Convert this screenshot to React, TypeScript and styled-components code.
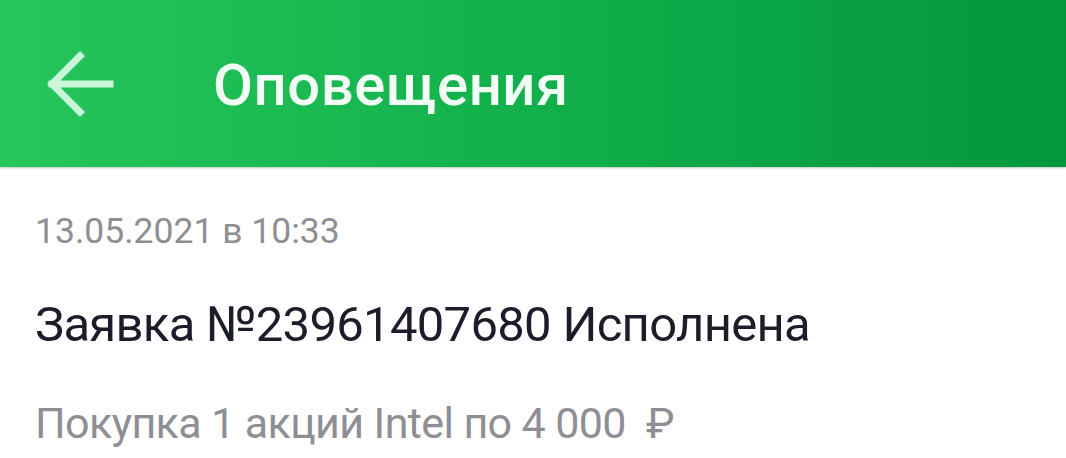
import styled, { createGlobalStyle } from "styled-components";

const GlobalStyle = createGlobalStyle`
  html, body {
    margin: 0;
    padding: 0;
    background: #ffffff;
    font-family: Roboto, "Noto Sans", sans-serif;
  }
`;

const Page = styled.div`
  width: 1066px;
  height: 458px;
  overflow: hidden;
  background: #ffffff;
`;

const Header = styled.header`
  display: flex;
  align-items: center;
  height: 167px;
  padding: 3px 0 0 44px;
  box-sizing: border-box;
  background: linear-gradient(90deg, #26c65b 0%, #12b04c 50%, #00973d 100%);
  box-shadow: 0 1px 2px rgba(0, 0, 0, 0.25);
`;

const BackButton = styled.button`
  display: flex;
  align-items: center;
  justify-content: center;
  width: 72px;
  height: 72px;
  margin-top: -3px;
  padding: 0;
  border: none;
  background: none;
  cursor: pointer;
`;

const Title = styled.h1`
  margin: 0 0 0 97px;
  font-family: Roboto, sans-serif;
  font-weight: 500;
  font-size: 58px;
  color: #f2fff5;
  letter-spacing: 0.6px;
`;

const Notice = styled.section`
  display: flex;
  flex-direction: column;
  padding: 43px 35px 0;
`;

const Line = styled.div<{ $size: number; $color: string; $gap: number; $track: number }>`
  margin-top: ${(p) => p.$gap}px;
  font-size: ${(p) => p.$size}px;
  line-height: ${(p) => Math.round(p.$size * 1.2)}px;
  letter-spacing: ${(p) => p.$track}px;
  color: ${(p) => p.$color};
  white-space: nowrap;
`;

const ArrowBack = () => (
  <svg width="72" height="72" viewBox="0 0 72 72" fill="none">
    <path
      d="M66 36H8M36 8L8 36l28 28"
      stroke="#cdf5d8"
      strokeWidth="7"
      strokeLinecap="square"
    />
  </svg>
);

export default function App() {
  return (
    <Page>
      <GlobalStyle />
      <Header>
        <BackButton aria-label="Назад">
          <ArrowBack />
        </BackButton>
        <Title>Оповещения</Title>
      </Header>
      <Notice>
        <Line $size={35.5} $color="#8e8e94" $gap={0} $track={0}>
          13.05.2021 в 10:33
        </Line>
        <Line $size={49} $color="#1b1d2b" $gap={42} $track={-0.7}>
          Заявка №23961407680 Исполнена
        </Line>
        <Line $size={43} $color="#8e8e94" $gap={43} $track={-0.6}>
          Покупка 1 акций Intel по 4 000&nbsp;&nbsp;₽
        </Line>
      </Notice>
    </Page>
  );
}
